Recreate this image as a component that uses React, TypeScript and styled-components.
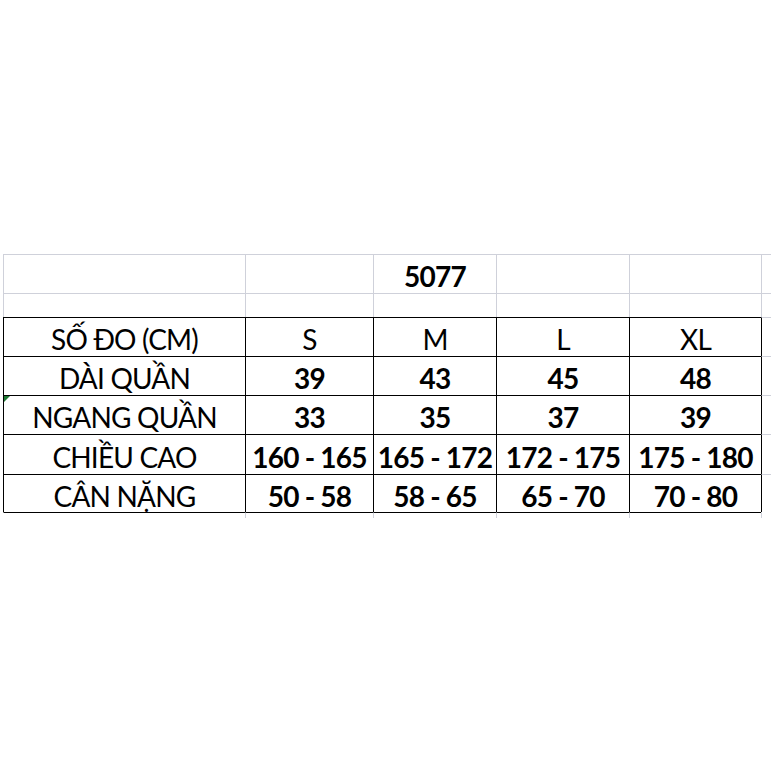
import React from 'react';
import styled, { createGlobalStyle } from 'styled-components';

const GRID = '#cfd1da';
const INK = '#000';

type Edge = 'ink' | 'grid' | 'none';

const GlobalStyle = createGlobalStyle`
  html, body {
    margin: 0;
    padding: 0;
    background: #fff;
  }
  body {
    font-family: Lato, "Open Sans", sans-serif;
    color: #000;
  }
`;

const Sheet = styled.div`
  width: 771px;
  height: 771px;
  overflow: hidden;
  box-sizing: border-box;
  padding: 254px 0 0 3px;
  background: #fff;
`;

const Grid = styled.div`
  display: grid;
  grid-template-columns: 242px 128px 123px 133px 132px 40px;
  grid-template-rows: 39px 24px 39px 39px 39px 40px 38px 6px;
`;

const edgeColor = (e: Edge) => (e === 'ink' ? INK : e === 'grid' ? GRID : 'transparent');

const Cell = styled.div<{ $top: Edge; $left: Edge; $bold?: boolean }>`
  position: relative;
  box-sizing: border-box;
  display: flex;
  align-items: center;
  justify-content: center;
  padding-top: 4px;
  border-top: 1px solid ${p => edgeColor(p.$top)};
  border-left: 1px solid ${p => edgeColor(p.$left)};
  font-size: 28px;
  letter-spacing: -0.8px;
  font-weight: ${p => (p.$bold ? 700 : 400)};
  white-space: nowrap;
  color: ${INK};
`;

const ErrorMark = styled.span`
  position: absolute;
  top: 0;
  left: 0;
  width: 0;
  height: 0;
  border-top: 6px solid #1f7a35;
  border-right: 6px solid transparent;
`;

const header = ['SỐ ĐO (CM)', 'S', 'M', 'L', 'XL'];

const rows: { label: string; values: string[]; mark?: boolean }[] = [
  { label: 'DÀI QUẦN', values: ['39', '43', '45', '48'] },
  { label: 'NGANG QUẦN', values: ['33', '35', '37', '39'], mark: true },
  { label: 'CHIỀU CAO', values: ['160 - 165', '165 - 172', '172 - 175', '175 - 180'] },
  { label: 'CÂN NẶNG', values: ['50 - 58', '58 - 65', '65 - 70', '70 - 80'] },
];

export default function App() {
  return (
    <Sheet>
      <GlobalStyle />
      <Grid>
        {/* plain sheet rows above the table */}
        <Cell $top="grid" $left="grid" />
        <Cell $top="grid" $left="grid" />
        <Cell $top="grid" $left="grid" $bold>5077</Cell>
        <Cell $top="grid" $left="grid" />
        <Cell $top="grid" $left="grid" />
        <Cell $top="grid" $left="grid" />

        {[0, 1, 2, 3, 4, 5].map(i => (
          <Cell key={`gap-${i}`} $top="grid" $left="grid" />
        ))}

        {header.map(h => (
          <Cell key={h} $top="ink" $left="ink">{h}</Cell>
        ))}
        <Cell $top="grid" $left="ink" />

        {rows.map(r => (
          <React.Fragment key={r.label}>
            <Cell $top="ink" $left="ink">
              {r.mark && <ErrorMark />}
              {r.label}
            </Cell>
            {r.values.map((v, i) => (
              <Cell key={i} $top="ink" $left="ink" $bold>{v}</Cell>
            ))}
            <Cell $top="grid" $left="ink" />
          </React.Fragment>
        ))}

        {[0, 1, 2, 3, 4].map(i => (
          <Cell key={`tail-${i}`} $top="ink" $left={i === 0 ? 'none' : 'grid'} />
        ))}
        <Cell $top="none" $left="grid" />
      </Grid>
    </Sheet>
  );
}
